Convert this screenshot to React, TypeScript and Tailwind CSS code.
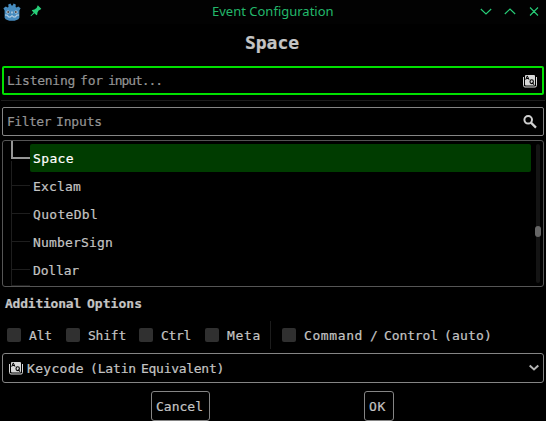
import React from "react";

type Run = [text: string, width: number, gapAfter?: number];

/** Monospaced label whose words are tracked to their own widths. */
function Label({ runs, size = 13, className = "" }: { runs: Run[]; size?: number; className?: string }) {
  const advance = size * 0.602;
  return (
    <span className={`flex whitespace-pre leading-none ${className}`} style={{ fontSize: size }}>
      {runs.map(([text, width, gap = 0], i) => (
        <span
          key={i}
          className="shrink-0"
          style={{
            width: width + 1,
            marginRight: gap - 1,
            letterSpacing: (width + 1) / text.length - advance,
          }}
        >
          {text}
        </span>
      ))}
    </span>
  );
}

function GodotLogo() {
  return (
    <svg width="18" height="18" viewBox="0 0 18 18">
      <path
        d="M.4 5.2 2.8 3.5l1.700 1 1-.5L5.200 1.600 7.500.6l1 1.900h1.100l1-1.900 2.200 1-.2 2.400 1 .5 1.700-1 2.300 1.700-1.200 2.300v7.200c-1 2.200-3.700 3.100-7.400 3.100S2.600 16.900 1.600 14.700V7.500z"
        fill="#478cbf"
      />
      <path
        d="M2 12l2.700.2.4 1.700 2.500.2.500-1.200h1.800l.5 1.200 2.500-.2.400-1.700 2.700-.2"
        fill="none"
        stroke="#d6e3ee"
        strokeWidth=".9"
      />
      <circle cx="5" cy="9" r="1.600" fill="#d3dbe2" />
      <circle cx="13" cy="9" r="1.600" fill="#d3dbe2" />
      <circle cx="5.200" cy="9.100" r="1" fill="#414042" />
      <circle cx="12.800" cy="9.100" r="1" fill="#414042" />
      <path d="M9 8.500v2" stroke="#e8edf0" strokeWidth="1.100" />
    </svg>
  );
}

function PinIcon() {
  return (
    <svg width="12" height="12" viewBox="0 0 12 12" fill="#27ce78">
      <path d="M7.800.3 11.300 3.800 10.200 4.800 8.600 5.600 7.500 7.600 7.200 9.700 6.500 10.300 4.400 8.300 1 11.300 .5 10.700 3.600 7.500 1.800 5.600 2.300 4.900 4.400 4.600 6.600 3.100z" />
    </svg>
  );
}

function KeyIcon() {
  return (
    <svg width="14" height="14" viewBox="0 0 14 14">
      <path d="M.5 3v8.500q0 1.500 1.500 1.500h10q1.500 0 1.500-1.500V3" fill="none" stroke="#d8d8d8" />
      <rect x="2" y="1" width="10" height="10.500" rx="1" fill="#d8d8d8" />
      <path d="M2.700 5.700 4.300 1.900 6 5.700M3.300 4.500h2.200" fill="none" stroke="#000" strokeWidth="1" />
      <ellipse cx="8.700" cy="7.700" rx="1.700" ry="1.900" fill="none" stroke="#000" strokeWidth="1.100" />
      <path d="m9 8.600 2 2" stroke="#000" strokeWidth="1.100" />
    </svg>
  );
}

function SearchIcon() {
  return (
    <svg width="14" height="14" viewBox="0 0 14 14" fill="none" stroke="#d0d0d0" strokeWidth="2">
      <circle cx="5.200" cy="4.800" r="3.800" />
      <path d="m8 7.600 5 5" strokeWidth="2.200" />
    </svg>
  );
}

function WindowControls() {
  return (
    <svg width="60" height="12" viewBox="0 0 60 12" fill="none" stroke="#27ce78" strokeWidth="1.100">
      <path d="m.8 3 5.200 5 5.200-5M24.800 8l5.200-5 5.200 5M50 1.500l8 8M58 1.500l-8 8" />
    </svg>
  );
}

const rows: { name: string; width: number; selected?: boolean }[] = [
  { name: "Space", width: 40, selected: true },
  { name: "Exclam", width: 47 },
  { name: "QuoteDbl", width: 64 },
  { name: "NumberSign", width: 79 },
  { name: "Dollar", width: 45 },
];

function Option({ runs, className }: { runs: Run[]; className: string }) {
  return (
    <div className={`flex shrink-0 items-center gap-2 ${className}`}>
      <span className="size-3.5 shrink-0 rounded-[2px] bg-[#303030]" />
      <Label runs={runs} />
    </div>
  );
}

function InputList() {
  return (
    <div className="relative mx-0.5 mt-1 flex h-[147px] overflow-hidden rounded-[3px] border border-[#555]">
      <div className="ml-[27px] mt-[3px] w-[501px] shrink-0">
        {rows.map((row) => (
          <div
            key={row.name}
            className={
              row.selected
                ? "flex h-7 items-center rounded-[2px] bg-[#003c00] pl-[3px] text-white"
                : "flex h-7 items-center pl-[3px]"
            }
          >
            <Label runs={[[row.name, row.width]]} />
          </div>
        ))}
      </div>
      <div className="ml-[4px] mt-[3px] flex h-[139px] w-1.5 justify-center">
        <div className="w-1 rounded-full bg-[#141414]">
          <div className="-ml-px mt-[82px] h-[11px] w-1.5 rounded-full bg-[#666]" />
        </div>
      </div>
      <svg className="absolute left-0 top-0" width="28" height="145" viewBox="0 0 28 145" fill="none">
        <path d="M8.500 20v125M9 44.500h18M9 72.500h18M9 100.500h18M9 128.500h18M9 144.500h18" stroke="#1e1e1e" />
        <path d="M9 0v17h18" stroke="#969696" strokeWidth="2" />
      </svg>
    </div>
  );
}

export default function App() {
  return (
    <div className="flex h-[421px] w-[546px] flex-col overflow-hidden bg-black font-['DejaVu_Sans_Mono',monospace] text-[#c4c4c4] [-webkit-text-stroke:0.2px_currentColor]">
      <header className="flex h-6 shrink-0 items-center bg-[#020202] pl-[3px] [-webkit-text-stroke:0]">
        <GodotLogo />
        <span className="mb-0.5 ml-[9px]">
          <PinIcon />
        </span>
        <span className="ml-[170px] mb-px w-[122px] whitespace-nowrap font-['Noto_Sans',sans-serif] text-[13px] leading-none text-[#23b86b]">
          Event Configuration
        </span>
        <span className="ml-[146px]">
          <WindowControls />
        </span>
      </header>

      <h1 className="flex h-[42px] shrink-0 items-center pl-[245px] pb-1 font-bold">
        <Label runs={[["Space", 53]]} size={18} />
      </h1>

      <div className="mx-0.5 flex h-[29px] shrink-0 items-center justify-between rounded-[2px] border-2 border-[#00e000] pl-[3px] pr-[5px] text-[#949494]">
        <Label
          runs={[
            ["Listening", 67, 6],
            ["for", 22, 6],
            ["input...", 53],
          ]}
        />
        <KeyIcon />
      </div>
      <div className="mx-px mt-[5px] h-px shrink-0 bg-[#1c1c1c]" />
      <div className="mx-0.5 mt-1.5 flex h-[29px] shrink-0 items-center justify-between rounded-[2px] border border-[#858585] pl-1 pr-1.5 text-[#949494]">
        <Label
          runs={[
            ["Filter", 43, 6],
            ["Inputs", 45],
          ]}
        />
        <SearchIcon />
      </div>

      <div className="shrink-0">
        <InputList />
      </div>

      <h2 className="flex h-[34px] shrink-0 items-center pb-0.5 pl-[5px] font-bold">
        <Label
          runs={[
            ["Additional", 75, 7],
            ["Options", 54],
          ]}
        />
      </h2>

      <div className="flex h-7 shrink-0 items-center pl-[7px]">
        <Option className="w-[59px]" runs={[["Alt", 22]]} />
        <Option className="w-[73px]" runs={[["Shift", 37]]} />
        <Option className="w-[66px]" runs={[["Ctrl", 29]]} />
        <Option className="w-[65px]" runs={[["Meta", 33]]} />
        <span className="h-7 w-px shrink-0 bg-[#1c1c1c]" />
        <Option
          className="ml-[11px]"
          runs={[
            ["Command", 58, 8],
            ["/", 8, 6],
            ["Control", 53, 7],
            ["(auto)", 47],
          ]}
        />
      </div>

      <div className="mx-0.5 mt-1 flex h-[30px] shrink-0 items-center rounded-[3px] border border-[#858585] pl-1.5 pr-1">
        <KeyIcon />
        <span className="ml-1 flex-1">
          <Label
            runs={[
              ["Keycode", 56, 7],
              ["(Latin", 45, 6],
              ["Equivalent)", 82],
            ]}
          />
        </span>
        <svg width="10" height="8" viewBox="0 0 10 8" fill="none" stroke="#b5b5b5" strokeWidth="2">
          <path d="m.7 1.500 4.300 4 4.300-4" />
        </svg>
      </div>

      <div className="mt-2 flex h-[30px] shrink-0 gap-[154px] pl-[151px]">
        <button className="flex w-[59px] items-center rounded-[3px] border border-[#858585] pl-1">
          <Label runs={[["Cancel", 46]]} />
        </button>
        <button className="flex w-[30px] items-center rounded-[3px] border border-[#858585] pl-1">
          <Label runs={[["OK", 16]]} />
        </button>
      </div>
    </div>
  );
}
